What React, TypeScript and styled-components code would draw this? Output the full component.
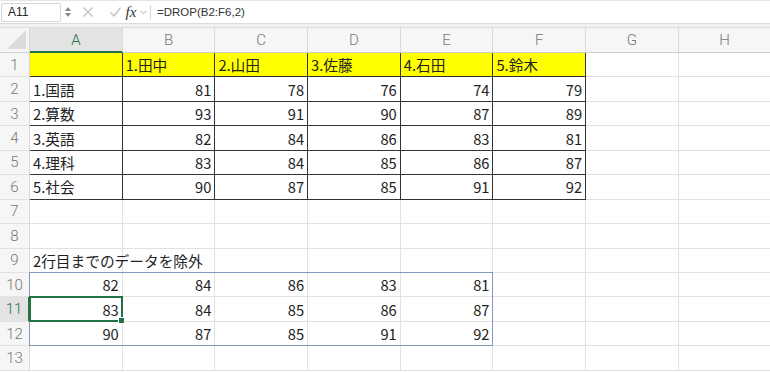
import React from "react";
import styled, { createGlobalStyle } from "styled-components";

const Global = createGlobalStyle`
  html, body { margin: 0; padding: 0; background: #fff; }
  body { width: 770px; height: 373px; overflow: hidden; }
`;

const COLW = 92.7;
const ROWH = 24.45;
const GREEN = "#217346";

const Page = styled.div`
  width: 770px;
  height: 373px;
  overflow: hidden;
  display: flex;
  flex-direction: column;
  font-family: "Noto Sans CJK JP", "Noto Sans", sans-serif;
`;

const FormulaBar = styled.div`
  height: 22px;
  flex: none;
  display: flex;
  align-items: center;
  background: #fff;
  border-top: 1px solid #e6e6e6;
  border-bottom: 1px solid #dcdcdc;
`;

const NameBox = styled.div`
  width: 60px;
  height: 19px;
  margin-left: 1px;
  border: 1px solid #d6d6d6;
  border-radius: 2px;
  display: flex;
  align-items: center;
  padding-left: 6px;
  font-family: "Liberation Sans", Arial, sans-serif;
  font-size: 12px;
  color: #222;
  box-sizing: border-box;
`;

const Spinner = styled.div`
  width: 9px;
  margin-left: 2px;
  display: flex;
  flex-direction: column;
  align-items: center;
  gap: 2px;
`;

const Tri = styled.div<{ $down?: boolean }>`
  width: 0;
  height: 0;
  border-left: 3px solid transparent;
  border-right: 3px solid transparent;
  ${(p) => (p.$down ? "border-top: 4px solid #888;" : "border-bottom: 4px solid #888;")}
`;

const IconSlot = styled.div<{ $w: number; $ml?: number }>`
  width: ${(p) => p.$w}px;
  margin-left: ${(p) => p.$ml ?? 0}px;
  display: flex;
  align-items: center;
  justify-content: center;
`;

const Fx = styled.span`
  font-family: "Liberation Serif", "DejaVu Serif", serif;
  font-style: italic;
  font-size: 15px;
  color: #333;
  line-height: 1;
`;

const Sep = styled.div`
  width: 1px;
  height: 15px;
  background: #d8d8d8;
  margin: 0 6px 0 3px;
`;

const FormulaText = styled.div`
  font-family: "Liberation Sans", Arial, sans-serif;
  font-size: 11.5px;
  color: #333;
`;

const Band = styled.div`
  height: 3px;
  flex: none;
  background: #f1f1f1;
  border-bottom: 1px solid #dedede;
`;

const Sheet = styled.div`
  position: relative;
  display: grid;
  grid-template-columns: 30px repeat(8, ${COLW}px);
  grid-template-rows: 25px repeat(13, ${ROWH}px);
  background: #fff;
`;

const Corner = styled.div`
  background: #f5f5f5;
  border-right: 1px solid #dadada;
  border-bottom: 1px solid #cfcfcf;
  box-sizing: border-box;
  position: relative;
  overflow: hidden;
`;

const CornerTri = styled.div`
  position: absolute;
  right: 3px;
  bottom: 3px;
  width: 0;
  height: 0;
  border-left: 19px solid transparent;
  border-bottom: 19px solid #dcdcdc;
`;

const ColHead = styled.div<{ $sel?: boolean }>`
  background: ${(p) => (p.$sel ? "#e3e3e3" : "#f6f6f6")};
  color: ${(p) => (p.$sel ? GREEN : "#777")};
  border-right: 1px solid #dadada;
  border-bottom: ${(p) => (p.$sel ? `2px solid ${GREEN}` : "1px solid #cfcfcf")};
  box-sizing: border-box;
  display: flex;
  align-items: center;
  justify-content: center;
  font-family: Roboto, "Liberation Sans", sans-serif;
  font-weight: 300;
  font-size: 15px;
`;

const RowHead = styled.div<{ $sel?: boolean }>`
  background: ${(p) => (p.$sel ? "#e3e3e3" : "#f6f6f6")};
  color: ${(p) => (p.$sel ? GREEN : "#777")};
  border-right: ${(p) => (p.$sel ? `2px solid ${GREEN}` : "1px solid #d6d6d6")};
  border-bottom: 1px solid #e2e2e2;
  box-sizing: border-box;
  display: flex;
  align-items: center;
  justify-content: center;
  font-family: Roboto, "Liberation Sans", sans-serif;
  font-weight: 300;
  font-size: 15px;
`;

const Cell = styled.div<{ $yellow?: boolean; $table?: boolean; $num?: boolean }>`
  background: ${(p) => (p.$yellow ? "#ffff00" : "#fff")};
  border-right: 1px solid ${(p) => (p.$table ? "#333" : "#e1e1e1")};
  border-bottom: 1px solid ${(p) => (p.$table ? "#333" : "#e1e1e1")};
  box-sizing: border-box;
  display: flex;
  align-items: center;
  justify-content: ${(p) => (p.$num ? "flex-end" : "flex-start")};
  padding: 0 3px 0 3px;
  font-size: 14.7px;
  color: #222;
  white-space: nowrap;
  overflow: visible;
  position: relative;
`;

const CellText = styled.span`
  position: relative;
  z-index: 1;
`;

const Overlay = styled.div<{ $col: string; $row: string }>`
  position: absolute;
  inset: 0;
  grid-column: ${(p) => p.$col};
  grid-row: ${(p) => p.$row};
  pointer-events: none;
  z-index: 2;
`;

const SpillFrame = styled.div`
  position: absolute;
  inset: -1px 0 0 -1px;
  border: 1px solid #8497bf;
`;

const SelFrame = styled.div`
  position: absolute;
  inset: -1px 0 0 -1px;
  border: 2px solid ${GREEN};
`;

const Handle = styled.div`
  position: absolute;
  right: -4px;
  bottom: -4px;
  width: 5px;
  height: 5px;
  background: ${GREEN};
  border: 1px solid #fff;
`;

const cols = ["A", "B", "C", "D", "E", "F", "G", "H"];

type CellData = { v: string; num?: boolean };

const table: string[][] = [
  ["", "1.田中", "2.山田", "3.佐藤", "4.石田", "5.鈴木"],
  ["1.国語", "81", "78", "76", "74", "79"],
  ["2.算数", "93", "91", "90", "87", "89"],
  ["3.英語", "82", "84", "86", "83", "81"],
  ["4.理科", "83", "84", "85", "86", "87"],
  ["5.社会", "90", "87", "85", "91", "92"],
];

const spill = [
  ["82", "84", "86", "83", "81"],
  ["83", "84", "85", "86", "87"],
  ["90", "87", "85", "91", "92"],
];

function cellAt(r: number, c: number): CellData {
  if (r <= 6 && c < 6) {
    const v = table[r - 1][c];
    return { v, num: /^\d+$/.test(v) };
  }
  if (r === 9 && c === 0) return { v: "2行目までのデータを除外" };
  if (r >= 10 && r <= 12 && c < 5) return { v: spill[r - 10][c], num: true };
  return { v: "" };
}

const XIcon = () => (
  <svg width="12" height="12" viewBox="0 0 12 12">
    <path d="M1.5 1.5 L10.5 10.5 M10.5 1.5 L1.5 10.5" stroke="#c2c2c2" strokeWidth="1.4" fill="none" />
  </svg>
);

const CheckIcon = () => (
  <svg width="13" height="12" viewBox="0 0 13 12">
    <path d="M1.5 6.5 L5 10 L11.5 1.5" stroke="#c2c2c2" strokeWidth="1.4" fill="none" />
  </svg>
);

const Chevron = () => (
  <svg width="7" height="5" viewBox="0 0 7 5">
    <path d="M0.8 1 L3.5 3.8 L6.2 1" stroke="#aaa" strokeWidth="1" fill="none" />
  </svg>
);

export default function App() {
  const rows = Array.from({ length: 13 }, (_, i) => i + 1);
  return (
    <Page>
      <Global />
      <FormulaBar>
        <NameBox>A11</NameBox>
        <Spinner>
          <Tri />
          <Tri $down />
        </Spinner>
        <IconSlot $w={16} $ml={8}>
          <XIcon />
        </IconSlot>
        <IconSlot $w={16} $ml={11}>
          <CheckIcon />
        </IconSlot>
        <IconSlot $w={16} $ml={0}>
          <Fx>fx</Fx>
        </IconSlot>
        <IconSlot $w={8}>
          <Chevron />
        </IconSlot>
        <Sep />
        <FormulaText>=DROP(B2:F6,2)</FormulaText>
      </FormulaBar>
      <Band />
      <Sheet>
        <Corner>
          <CornerTri />
        </Corner>
        {cols.map((c) => (
          <ColHead key={c} $sel={c === "A"}>
            {c}
          </ColHead>
        ))}
        {rows.map((r) => (
          <React.Fragment key={r}>
            <RowHead $sel={r === 11}>{r}</RowHead>
            {cols.map((_, c) => {
              const d = cellAt(r, c);
              return (
                <Cell key={c} $yellow={r === 1 && c < 6} $table={r <= 6 && c < 6} $num={d.num}>
                  <CellText>{d.v}</CellText>
                </Cell>
              );
            })}
          </React.Fragment>
        ))}
        <Overlay $col="2 / 7" $row="11 / 14">
          <SpillFrame />
        </Overlay>
        <Overlay $col="2 / 3" $row="12 / 13">
          <SelFrame>
            <Handle />
          </SelFrame>
        </Overlay>
      </Sheet>
    </Page>
  );
}
